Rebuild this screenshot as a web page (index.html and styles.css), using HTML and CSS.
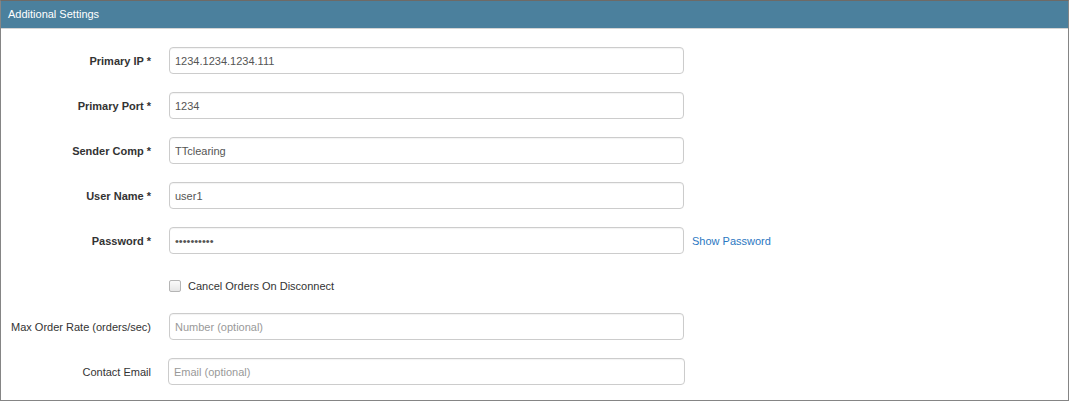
FILE: index.html
```html
<!DOCTYPE html>
<html lang="en">
<head>
<meta charset="utf-8">
<title>Additional Settings</title>
<link rel="stylesheet" href="styles.css">
</head>
<body>
<section class="panel">
  <header class="panel-heading">Additional Settings</header>
  <form class="settings-form">
    <label class="field-label required" for="primary-ip">Primary IP *</label>
    <input class="field-input" id="primary-ip" type="text" value="1234.1234.1234.111">
    <span></span>

    <label class="field-label required" for="primary-port">Primary Port *</label>
    <input class="field-input" id="primary-port" type="text" value="1234">
    <span></span>

    <label class="field-label required" for="sender-comp">Sender Comp *</label>
    <input class="field-input" id="sender-comp" type="text" value="TTclearing">
    <span></span>

    <label class="field-label required" for="user-name">User Name *</label>
    <input class="field-input" id="user-name" type="text" value="user1">
    <span></span>

    <label class="field-label required" for="password">Password *</label>
    <input class="field-input" id="password" type="password" value="secret1234">
    <a class="field-link" href="#">Show Password</a>

    <span></span>
    <label class="check-row"><input class="check-box" type="checkbox"> Cancel Orders On Disconnect</label>
    <span></span>

    <label class="field-label" for="max-rate">Max Order Rate (orders/sec)</label>
    <input class="field-input" id="max-rate" type="text" placeholder="Number (optional)">
    <span></span>

    <label class="field-label" for="contact-email">Contact Email</label>
    <input class="field-input field-input-wide" id="contact-email" type="text" placeholder="Email (optional)">
    <span></span>
  </form>
</section>
</body>
</html>
```

FILE: styles.css
```css
* {
  box-sizing: border-box;
}

html,
body {
  margin: 0;
  padding: 0;
  background: #ffffff;
}

body {
  font-family: "Liberation Sans", Arial, Helvetica, sans-serif;
  font-size: 11px;
  color: #333333;
}

.panel {
  width: 1069px;
  height: 401px;
  border: 1px solid #858585;
  border-top-color: #6e6a66;
  background: #ffffff;
}

.panel-heading {
  height: 28px;
  padding: 0 7px 1px;
  display: flex;
  align-items: center;
  background: #4b809d;
  border-bottom: 1px solid #d4d4d4;
  color: #ffffff;
  font-size: 11px;
}

.settings-form {
  display: grid;
  grid-template-columns: 150px 515px auto;
  column-gap: 18px;
  row-gap: 18px;
  align-items: center;
  padding-top: 18px;
}

/* trailing column (help link) sits closer to the inputs */
.settings-form > :nth-child(3n) {
  margin-left: -10px;
}

.field-label {
  text-align: right;
  font-size: 11px;
  color: #333333;
  white-space: nowrap;
}

.field-label.required {
  font-weight: bold;
}

.field-input {
  height: 27px;
  width: 515px;
  padding: 0 6px 0 5px;
  border: 1px solid #cccccc;
  border-radius: 4px;
  box-shadow: inset 0 1px 1px rgba(0, 0, 0, 0.05);
  font-family: "Liberation Sans", Arial, Helvetica, sans-serif;
  font-size: 11px;
  color: #555555;
  background: #ffffff;
  outline: none;
}

.field-input::placeholder {
  color: #999999;
}

.field-input-wide {
  width: 517px;
  margin-left: -1px;
}

.field-link {
  color: #2b78c2;
  text-decoration: none;
  font-size: 11px;
}

.check-row {
  height: 23px;
  display: flex;
  align-items: center;
  gap: 7px;
  margin-top: 2px;
  margin-bottom: -2px;
  color: #333333;
  font-size: 11px;
}

.check-box {
  appearance: none;
  -webkit-appearance: none;
  width: 12px;
  height: 12px;
  margin: 0;
  border: 1px solid #b5b5b5;
  border-radius: 2px;
  background: linear-gradient(#fafafa, #e6e6e6);
}
```
